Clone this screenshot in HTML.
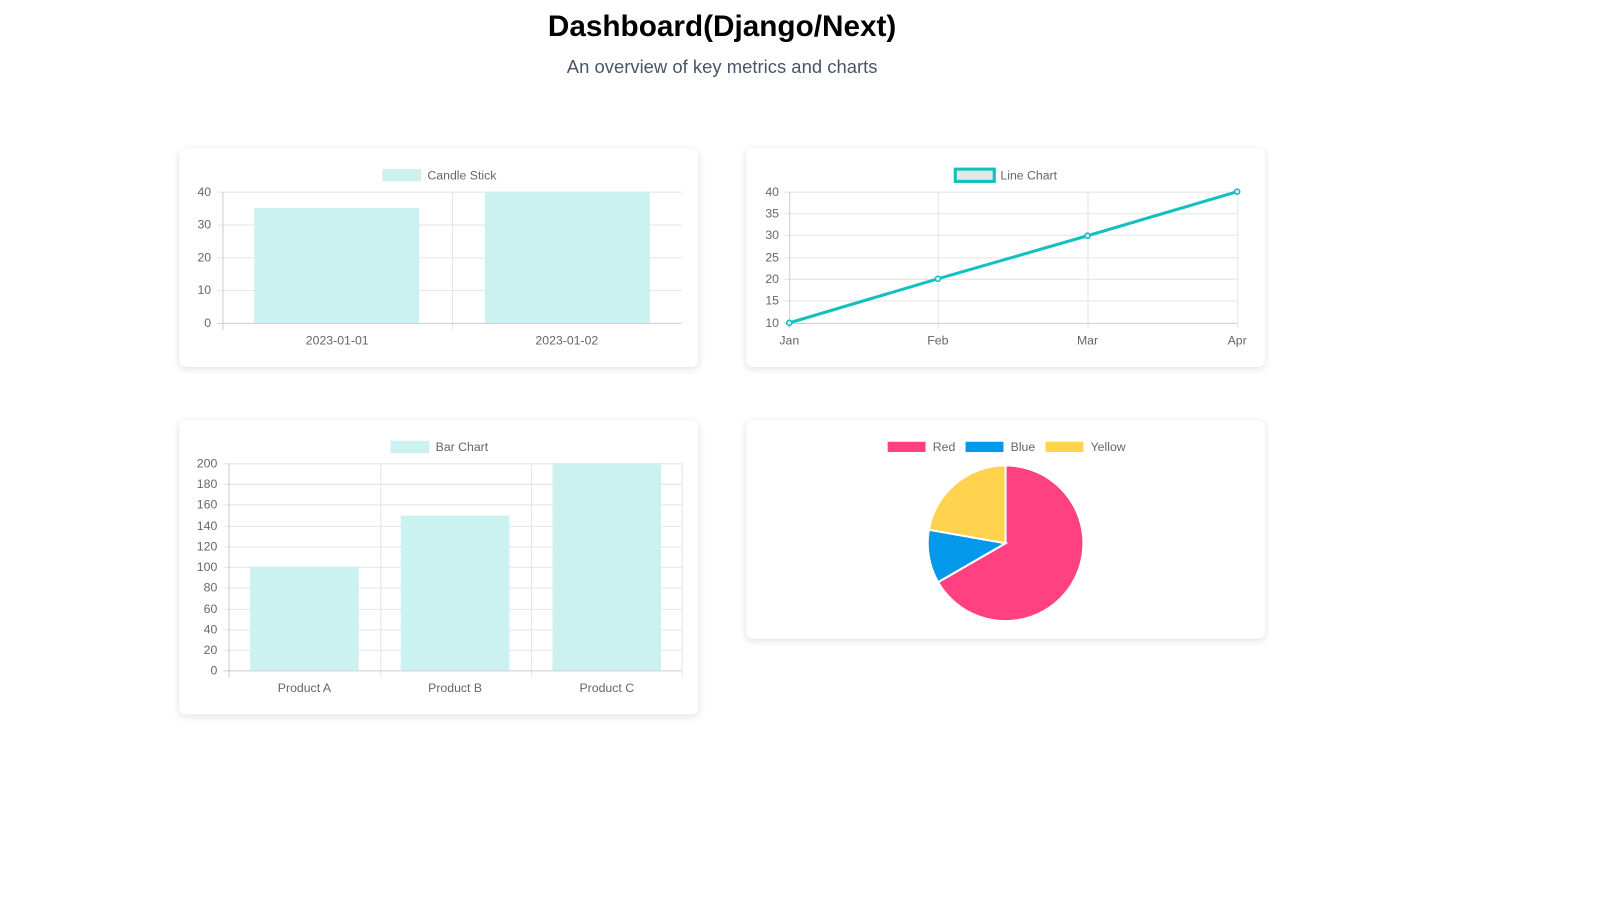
<!DOCTYPE html>
<html><head><meta charset="utf-8"><style>
html,body{margin:0;padding:0;background:#fff;width:1609px;height:913px;overflow:hidden;font-family:"Liberation Sans",sans-serif}
#wrap{position:absolute;left:0;top:0;width:1570px;height:891px;transform:scale(1.025);transform-origin:0 0}
h1{position:absolute;left:0;width:1409px;top:10px;margin:0;text-align:center;font-size:29px;font-weight:bold;color:#000}
p.sub{position:absolute;left:0;width:1409px;top:55px;margin:0;text-align:center;font-size:18px;color:#4a5568}
.card{position:absolute;background:#fff;border-radius:6px;box-shadow:0 2px 8px rgba(0,0,0,0.12)}
svg{position:absolute;left:0;top:0}
text{font-family:"Liberation Sans",sans-serif;font-size:12px;fill:#666}
</style></head><body><div id="wrap">
<h1>Dashboard(Django/Next)</h1>
<p class="sub">An overview of key metrics and charts</p>
<div class="card" style="left:175px;top:145px;width:506px;height:213px"></div>
<div class="card" style="left:728px;top:145px;width:506px;height:213px"></div>
<div class="card" style="left:175px;top:410px;width:506px;height:287px"></div>
<div class="card" style="left:728px;top:410px;width:506px;height:213px"></div>
<svg width="1570" height="891">
<!-- Card 1 -->
<rect x="373" y="165" width="38" height="12" fill="#cbf1f0"/>
<text x="417" y="175">Candle Stick</text>
<g stroke="#e5e5e5" stroke-width="1">
<line x1="212" y1="187.5" x2="665" y2="187.5"/><line x1="212" y1="219.5" x2="665" y2="219.5"/><line x1="212" y1="251.5" x2="665" y2="251.5"/><line x1="212" y1="283.5" x2="665" y2="283.5"/>
<line x1="441.5" y1="187" x2="441.5" y2="322"/>
</g>
<rect x="248" y="203" width="161" height="112" fill="#cbf1f0"/>
<rect x="473" y="187" width="161" height="128" fill="#cbf1f0"/>
<g stroke="#ccc"><line x1="212" y1="315.5" x2="665" y2="315.5"/><line x1="217.5" y1="187" x2="217.5" y2="322"/></g>
<g text-anchor="end"><text x="206" y="191">40</text><text x="206" y="223">30</text><text x="206" y="255">20</text><text x="206" y="287">10</text><text x="206" y="319">0</text></g>
<g text-anchor="middle"><text x="329" y="336">2023-01-01</text><text x="553" y="336">2023-01-02</text></g>
<!-- Card 2 -->
<rect x="932" y="165" width="38" height="12" fill="#e6e6e6" stroke="#14c0bf" stroke-width="3"/>
<text x="976" y="175">Line Chart</text>
<g stroke="#e5e5e5">
<line x1="765" y1="187.5" x2="1207" y2="187.5"/><line x1="765" y1="208.5" x2="1207" y2="208.5"/><line x1="765" y1="229.5" x2="1207" y2="229.5"/><line x1="765" y1="251.5" x2="1207" y2="251.5"/><line x1="765" y1="272.5" x2="1207" y2="272.5"/><line x1="765" y1="293.5" x2="1207" y2="293.5"/>
<line x1="915.5" y1="187" x2="915.5" y2="320"/><line x1="1061.5" y1="187" x2="1061.5" y2="320"/><line x1="1207.5" y1="187" x2="1207.5" y2="320"/>
</g>
<g stroke="#ccc"><line x1="765" y1="315.5" x2="1207" y2="315.5"/><line x1="770.5" y1="187" x2="770.5" y2="320"/></g>
<g text-anchor="end"><text x="760" y="191">40</text><text x="760" y="212">35</text><text x="760" y="233">30</text><text x="760" y="255">25</text><text x="760" y="276">20</text><text x="760" y="297">15</text><text x="760" y="319">10</text></g>
<g text-anchor="middle"><text x="770" y="336">Jan</text><text x="915" y="336">Feb</text><text x="1061" y="336">Mar</text><text x="1207" y="336">Apr</text></g>
<polyline points="770,315 915,272 1061,230 1207,187" fill="none" stroke="#14c0bf" stroke-width="3"/>
<g fill="#e6e6e6" stroke="#14c0bf" stroke-width="1.5"><circle cx="770" cy="315" r="2.5"/><circle cx="915" cy="272" r="2.5"/><circle cx="1061" cy="230" r="2.5"/><circle cx="1207" cy="187" r="2.5"/></g>
<!-- Card 3 -->
<rect x="381" y="430" width="38" height="12" fill="#cbf1f0"/>
<text x="425" y="440">Bar Chart</text>
<g stroke="#e5e5e5">
<line x1="218" y1="452.5" x2="665" y2="452.5"/><line x1="218" y1="472.5" x2="665" y2="472.5"/><line x1="218" y1="492.5" x2="665" y2="492.5"/><line x1="218" y1="513.5" x2="665" y2="513.5"/><line x1="218" y1="533.5" x2="665" y2="533.5"/><line x1="218" y1="553.5" x2="665" y2="553.5"/><line x1="218" y1="573.5" x2="665" y2="573.5"/><line x1="218" y1="594.5" x2="665" y2="594.5"/><line x1="218" y1="614.5" x2="665" y2="614.5"/><line x1="218" y1="634.5" x2="665" y2="634.5"/>
<line x1="371.5" y1="452" x2="371.5" y2="661"/><line x1="518.5" y1="452" x2="518.5" y2="661"/><line x1="665.5" y1="452" x2="665.5" y2="661"/>
</g>
<rect x="244" y="553" width="106" height="101" fill="#cbf1f0"/>
<rect x="391" y="503" width="106" height="151" fill="#cbf1f0"/>
<rect x="539" y="452" width="106" height="202" fill="#cbf1f0"/>
<g stroke="#ccc"><line x1="218" y1="654.5" x2="665" y2="654.5"/><line x1="223.5" y1="452" x2="223.5" y2="661"/></g>
<g text-anchor="end"><text x="212" y="456">200</text><text x="212" y="476">180</text><text x="212" y="496">160</text><text x="212" y="517">140</text><text x="212" y="537">120</text><text x="212" y="557">100</text><text x="212" y="577">80</text><text x="212" y="598">60</text><text x="212" y="618">40</text><text x="212" y="638">20</text><text x="212" y="658">0</text></g>
<g text-anchor="middle"><text x="297" y="675">Product A</text><text x="444" y="675">Product B</text><text x="592" y="675">Product C</text></g>
<!-- Card 4 -->
<rect x="866" y="431" width="37" height="10" fill="#ff4081"/><text x="910" y="440">Red</text>
<rect x="942" y="431" width="37" height="10" fill="#0398e9"/><text x="986" y="440">Blue</text>
<rect x="1020" y="431" width="37" height="10" fill="#ffd34d"/><text x="1064" y="440">Yellow</text>
<g stroke="#fff" stroke-width="2">
<path d="M981,530 L981,454 A76,76 0 1,1 915.2,568 Z" fill="#ff4081"/>
<path d="M981,530 L915.2,568 A76,76 0 0,1 906.2,516.8 Z" fill="#0398e9"/>
<path d="M981,530 L906.2,516.8 A76,76 0 0,1 981,454 Z" fill="#ffd34d"/>
</g>
</svg>
</div></body></html>
